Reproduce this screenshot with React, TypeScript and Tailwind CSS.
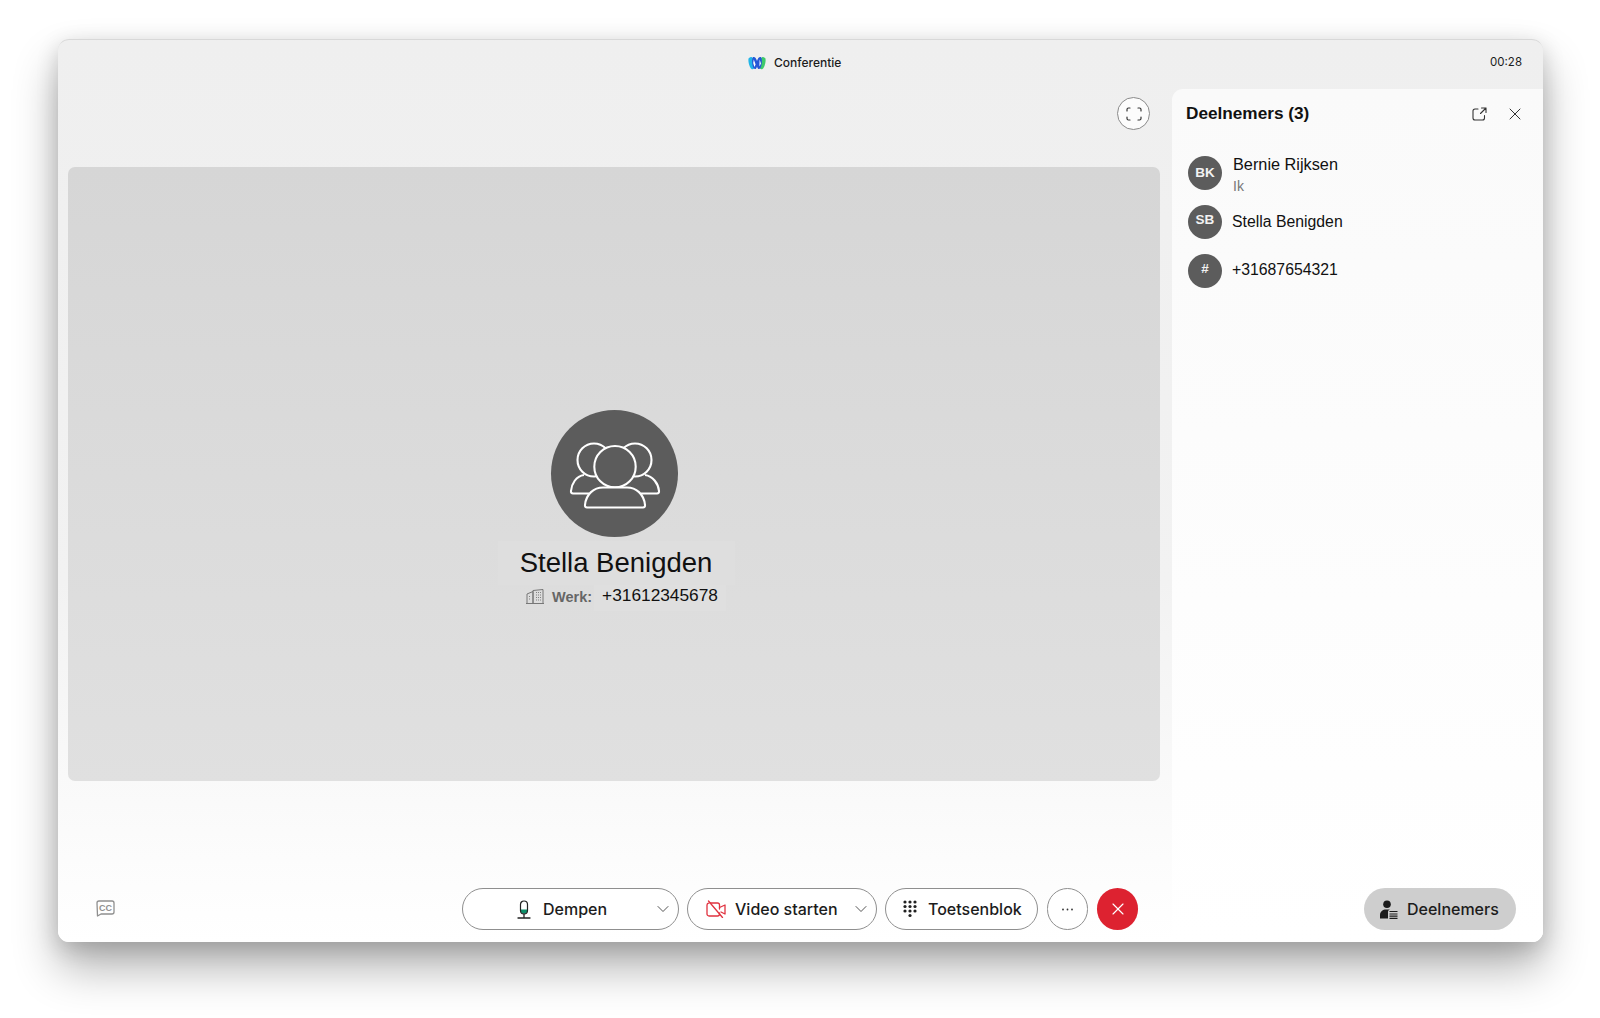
import { ChevronDown, X } from 'lucide-react';

const pill = "flex h-[42px] items-center rounded-full border border-[#8f8f8f] bg-white text-[16px] font-medium text-[#1c1c1c]";

function Logo() {
  return (
    <svg width="18" height="14" viewBox="0 0 18 14">
      <path d="M0.5 2.5C2 0.5 4 0.5 5 2.5L7.5 9C7 12.5 5 14 3.5 13C1.5 11.5 0 6 0.5 2.5Z" fill="#22b5e8" />
      <path d="M17.5 2.5C16 0.5 14 0.5 13 2.5L10.5 9C11 12.5 13 14 14.5 13C16.5 11.5 18 6 17.5 2.5Z" fill="#3ec96b" />
      <path d="M5 1C7 0.5 8 2 9 5C10 2 11 0.5 13 1C14.5 3 14 9 12.5 12C11 14 9.5 13 9 10.5C8.5 13 7 14 5.5 12C4 9 3.5 3 5 1Z" fill="#2557d6" />
      <path d="M5.8 3.5L7.6 8.5L6.4 11L5.2 7Z M11.6 3.5L13 7.5L11.4 10.5Z" fill="#fff" />
    </svg>
  );
}

function FullscreenIcon() {
  return (
    <svg width="16" height="14" viewBox="0 0 16 14" fill="none" stroke="#333" strokeWidth="1.2" strokeLinecap="round">
      <path d="M1 4V2.5A1.5 1.5 0 0 1 2.5 1H4M12 1h1.5A1.5 1.5 0 0 1 15 2.5V4M15 10v1.5a1.5 1.5 0 0 1-1.5 1.5H12M4 13H2.5A1.5 1.5 0 0 1 1 11.5V10" />
    </svg>
  );
}

function PopoutIcon() {
  return (
    <svg width="15" height="14" viewBox="0 0 15 14" fill="none" stroke="#333" strokeWidth="1.1" strokeLinecap="round" strokeLinejoin="round">
      <path d="M6 2H3a2 2 0 0 0-2 2v7a2 2 0 0 0 2 2h7.5a2 2 0 0 0 2-2V8.5" />
      <path d="M9.5 1H14V5.5M14 1L8.5 6.5" />
    </svg>
  );
}

function GroupIcon() {
  const c = "#5c5c5c";
  return (
    <svg width="127" height="127" viewBox="0 0 127 127" fill="none" stroke="#fff" strokeWidth="2.1">
      <circle cx="43" cy="50" r="16.5" />
      <circle cx="84" cy="50" r="16.5" />
      <path d="M33 65C25 66 20.5 74 20 81a2 2 0 0 0 2 2.5H38" />
      <path d="M94 65C102 66 107.5 74 108 81a2 2 0 0 1-2 2.5H90" />
      <circle cx="64" cy="56.7" r="20.7" fill={c} />
      <path d="M36 97.5H92a2 2 0 0 0 2-2.5C93 84 85 77.5 76 77.5H52C43 77.5 35 84 34 95a2 2 0 0 0 2 2.5Z" fill={c} />
    </svg>
  );
}

function BuildingIcon() {
  return (
    <svg width="18" height="15" viewBox="0 0 18 15" fill="none" stroke="#777" strokeWidth="1">
      <path d="M1 14.5V5L7 2.5V14.5M7 14.5V1.5L17 0.5V14.5M0 14.5H18" />
      <path d="M10 3.5h5M10 6h5M10 8.5h5M10 11h5M3 7.5h2M3 10h2" strokeWidth="0.9" strokeDasharray="1 1" />
    </svg>
  );
}

function MicIcon() {
  return (
    <svg width="14" height="19" viewBox="0 0 14 19" fill="none">
      <path d="M3.5 9.5h7V10a3.5 3.5 0 0 1-7 0Z" fill="#0d8f6a" />
      <rect x="3.5" y="1" width="7" height="13" rx="3.5" stroke="#222" strokeWidth="1.2" />
      <path d="M7 14v3M1 18h12" stroke="#222" strokeWidth="1.3" strokeLinecap="round" />
    </svg>
  );
}

function VideoOffIcon() {
  return (
    <svg width="20" height="18" viewBox="0 0 20 18" fill="none" stroke="#e0323f" strokeWidth="1.3" strokeLinejoin="round" strokeLinecap="round">
      <path d="M4 3H11.5A2 2 0 0 1 13.5 5V9M13.5 13V14A2 2 0 0 1 11.5 16H3A2 2 0 0 1 1 14V5A2 2 0 0 1 2.5 3.2" />
      <path d="M13.5 7.5L19 5V14L15 12" />
      <path d="M2.5 1L16.5 17.5" />
    </svg>
  );
}

function KeypadIcon() {
  const dots = [
    [2, 2], [7, 2], [12, 2],
    [2, 6.5], [7, 6.5], [12, 6.5],
    [2, 11], [7, 11], [12, 11],
    [7, 15.5],
  ];
  return (
    <svg width="14" height="18" viewBox="0 0 14 18" fill="#222">
      {dots.map(([x, y], i) => <circle key={i} cx={x} cy={y} r="1.6" />)}
    </svg>
  );
}

function DotsIcon() {
  return (
    <svg width="13" height="3" viewBox="0 0 13 3" fill="#333">
      <circle cx="2" cy="1.5" r="0.9" />
      <circle cx="6.5" cy="1.5" r="0.9" />
      <circle cx="11" cy="1.5" r="0.9" />
    </svg>
  );
}

function ParticipantsIcon() {
  return (
    <svg width="18" height="19" viewBox="0 0 18 19" fill="#1c1c1c">
      <circle cx="7" cy="4.2" r="3.8" />
      <path d="M0 18.5V15C0 11.5 3 9.5 6 9.5H10C8.5 10 8 11 8 12V18.5Z" />
      <path d="M9.5 11.5h8M9.5 14h8M9.5 16.2h8M9.5 18.4h8" stroke="#1c1c1c" strokeWidth="1.2" />
    </svg>
  );
}

function CaptionIcon() {
  return (
    <svg width="19" height="17" viewBox="0 0 19 17" fill="none" stroke="#8f8f8f" strokeWidth="1.3" strokeLinejoin="round">
      <path d="M3 1H16A2 2 0 0 1 18 3V12A2 2 0 0 1 16 14H5L1.5 16L1 3A2 2 0 0 1 3 1Z" />
      <text x="9.5" y="10.8" textAnchor="middle" fontSize="9" fontWeight="700" fill="#8f8f8f" stroke="none" fontFamily="Liberation Sans, sans-serif">CC</text>
    </svg>
  );
}

function Avatar({ label, lift }: { label: string; lift?: boolean }) {
  return (
    <div className={`flex h-[34px] w-[34px] shrink-0 items-center justify-center rounded-full bg-[#5c5c5c] font-['Liberation_Sans',sans-serif] text-[13.5px] font-bold text-[#f2f2f2] ${lift ? 'pb-[3px]' : ''}`}>
      {label}
    </div>
  );
}

export default function App() {
  return (
    <div className="h-[1018px] w-[1600px] overflow-hidden bg-white pl-[58px] pt-[39px] font-['Inter',sans-serif]">
      <div className="flex h-[903px] w-[1485px] flex-col overflow-hidden rounded-[11px] border-t border-[#d8d8d8] bg-gradient-to-b from-[#efefef] via-[#f2f2f2] via-60% to-white shadow-[0_26px_45px_rgba(0,0,0,0.3),0_6px_22px_rgba(0,0,0,0.16)]">

        {/* titelbalk */}
        <div className="flex h-[49px] shrink-0 items-center pb-[3px] pl-[690px] pr-[21px] text-[#1c1c1c]">
          <Logo />
          <span className="ml-[8px] text-[12px] font-medium">Conferentie</span>
          <span className="ml-auto text-[11.5px]">00:28</span>
        </div>

        <div className="flex min-h-0 flex-1">
          {/* gesprek */}
          <div className="flex w-[1114px] flex-col">
            <div className="flex h-[78px] justify-end pr-[22px] pt-[8px]">
              <button className="flex h-[33px] w-[33px] items-center justify-center rounded-full border border-[#8a8a8a] bg-[#fcfcfc]">
                <FullscreenIcon />
              </button>
            </div>

            <div className="ml-[10px] mr-[12px] flex h-[614px] flex-col items-center rounded-[7px] bg-gradient-to-b from-[#d6d6d6] to-[#e0e0e0] pt-[243px] font-['Liberation_Sans',sans-serif]">
              <div className="flex h-[127px] w-[127px] shrink-0 items-center justify-center rounded-full bg-[#5c5c5c]">
                <GroupIcon />
              </div>
              <div className="mt-[4px] flex h-[44px] w-[237px] translate-x-[2px] items-center justify-center bg-[#dedede] text-[27.5px] text-[#111]">
                Stella Benigden
              </div>
              <div className="flex h-[26px] translate-x-[12px] items-center">
                <div className="-mt-[3px] flex"><BuildingIcon /></div>
                <span className="ml-[8px] text-[14.5px] font-bold text-[#666]">Werk:</span>
                <span className="ml-[2px] flex h-[26px] items-center bg-[#dfdfdf] px-[8px] pb-[4px] text-[17.3px] text-[#111]">+31612345678</span>
              </div>
            </div>

            {/* knoppenbalk */}
            <div className="mt-auto flex items-center pb-[12px] pl-[38px]">
              <div className="-mt-[2px] flex"><CaptionIcon /></div>
              <div className="ml-[347px] flex items-center gap-[8px]">
                <div className={`${pill} relative w-[217px] pl-[54px]`}>
                  <MicIcon />
                  <span className="ml-[12px]">Dempen</span>
                  <ChevronDown className="absolute right-[5px] top-[10px] h-[20px] w-[20px] text-[#444]" strokeWidth={1.1} />
                </div>
                <div className={`${pill} relative w-[190px] pl-[18px]`}>
                  <VideoOffIcon />
                  <span className="ml-[9px]">Video starten</span>
                  <ChevronDown className="absolute right-[5px] top-[10px] h-[20px] w-[20px] text-[#444]" strokeWidth={1.1} />
                </div>
                <div className={`${pill} w-[153px] pl-[17px]`}>
                  <KeypadIcon />
                  <span className="ml-[11px]">Toetsenblok</span>
                </div>
                <div className={`${pill} ml-[1px] w-[41px] justify-center`}>
                  <DotsIcon />
                </div>
                <button className="ml-[1px] flex h-[42px] w-[41px] items-center justify-center rounded-full bg-[#dd2230] text-white">
                  <X className="h-[20px] w-[20px]" strokeWidth={1.4} />
                </button>
              </div>
            </div>
          </div>

          {/* deelnemers */}
          <div className="flex flex-1 flex-col rounded-tl-[11px] bg-gradient-to-b from-[#fafafa] to-white pb-[12px] font-['Liberation_Sans',sans-serif]">
            <div className="flex h-[49px] items-center pl-[14px] pr-[18px]">
              <h2 className="text-[17.2px] font-bold text-[#111]">Deelnemers (3)</h2>
              <div className="ml-auto flex items-center gap-[18px]">
                <PopoutIcon />
                <X className="h-[20px] w-[20px] text-[#333]" strokeWidth={1.2} />
              </div>
            </div>

            <div className="flex items-start pl-[16px] pt-[17px]">
              <div className="mt-[1px]"><Avatar label="BK" /></div>
              <div className="ml-[11px] -mt-[1px] flex flex-col">
                <span className="text-[16.3px] leading-[20px] text-[#111]">Bernie Rijksen</span>
                <span className="mt-[3px] text-[14px] leading-[18px] text-[#777]">Ik</span>
              </div>
            </div>
            <div className="flex items-center pl-[16px] pt-[10px]">
              <Avatar label="SB" lift />
              <span className="ml-[10px] text-[15.8px] text-[#111]">Stella Benigden</span>
            </div>
            <div className="flex items-center pl-[16px] pt-[15px]">
              <Avatar label="#" lift />
              <span className="ml-[10px] -mt-[3px] text-[15.8px] text-[#111]">+31687654321</span>
            </div>

            <div className="mt-auto flex justify-end pr-[27px]">
              <button className="flex h-[42px] w-[152px] items-center rounded-full bg-[#cecece] pl-[16px] font-['Inter',sans-serif] text-[16px] font-medium text-[#1c1c1c]">
                <ParticipantsIcon />
                <span className="ml-[9px]">Deelnemers</span>
              </button>
            </div>
          </div>
        </div>
      </div>
    </div>
  );
}
